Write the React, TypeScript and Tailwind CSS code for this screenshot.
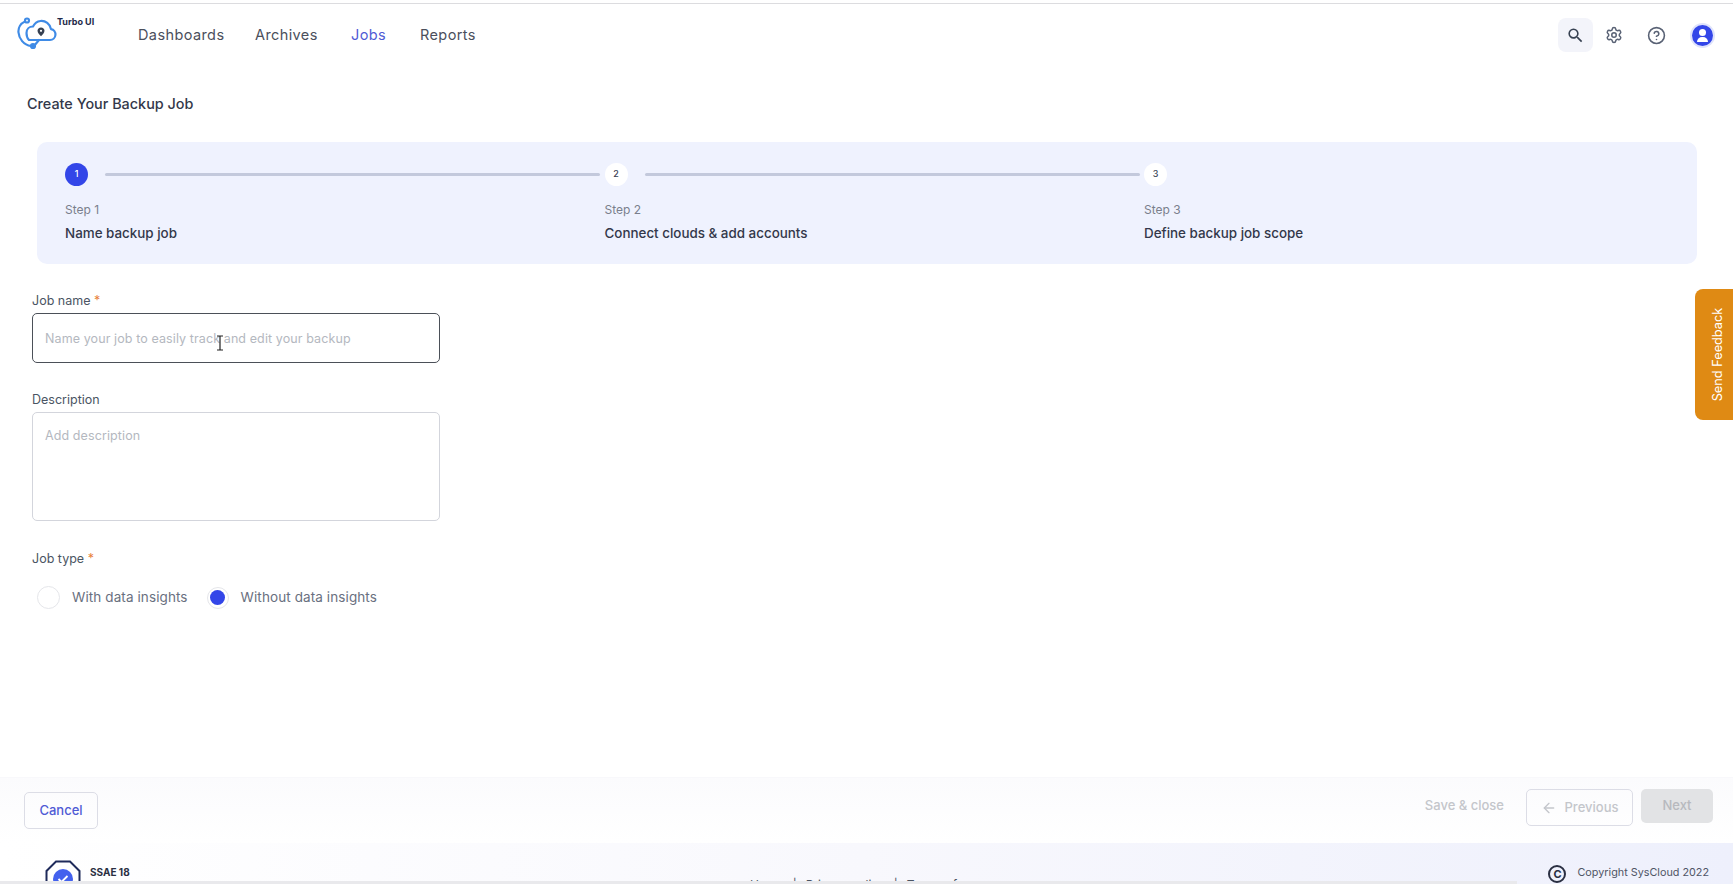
import { ArrowLeft, CircleHelp, Settings } from 'lucide-react';

const navItems = ['Dashboards', 'Archives', 'Jobs', 'Reports'];

const steps = [
  { num: 1, label: 'Step 1', title: 'Name backup job' },
  { num: 2, label: 'Step 2', title: 'Connect clouds & add accounts' },
  { num: 3, label: 'Step 3', title: 'Define backup job scope' },
];

function CloudLogo() {
  return (
    <svg width="42" height="34" viewBox="0 0 42 34" fill="none" stroke="#3f8be6" strokeWidth="2.2" strokeLinecap="round" strokeLinejoin="round">
      <path d="M12 23h21a5.500 5.500 0 0 0 1-10.900C33 7 28.500 3.500 23.500 4 20 4.400 17.500 6.500 16 9.500 12.500 9.500 9.500 12 9.500 16c0 3 1 5.500 2.500 7z" />
      <path d="M8 4.500C3.500 6.500 1 11 1.500 15.500 2 21.500 6.500 28 14 29" />
      <path d="M14 29h3l5-6" />
      <circle cx="10" cy="3.500" r="2" />
      <circle cx="16" cy="29" r="2" />
      <path d="M24 10.500c-2 0-3.500 1.500-3.500 3.300 0 2 2 4 3.500 5.500 1.500-1.500 3.500-3.500 3.500-5.500 0-1.800-1.500-3.300-3.500-3.300z" fill="#374151" stroke="none" />
      <circle cx="24" cy="13.800" r="1.100" fill="#fff" stroke="none" />
    </svg>
  );
}

function Header() {
  return (
    <header className="h-[62px] flex items-center justify-between pl-[17px] pr-[20px] shrink-0">
      <div className="flex items-center">
        <div className="w-[121px] h-[40px] relative flex items-start">
          <div className="mt-[2px]">
            <CloudLogo />
          </div>
          <span className="absolute left-[40px] top-[1px] text-[9px] leading-[12px] font-bold text-[#1e2a4a]">Turbo UI</span>
        </div>
        <nav className="flex items-center text-[14.500px] tracking-[0.4px] text-[#4b4f5c]">
          {navItems.map((item) => (
            <a
              key={item}
              className={
                item === 'Jobs'
                  ? 'text-[#4f5bd5] w-[69px]'
                  : item === 'Archives'
                    ? 'w-[96px]'
                    : item === 'Dashboards'
                      ? 'w-[117px]'
                      : ''
              }
            >
              {item}
            </a>
          ))}
        </nav>
      </div>
      <div className="flex items-center">
        <div className="w-[35px] h-[34px] rounded-lg bg-[#f3f4fa] flex items-center justify-center">
          <svg width="19" height="19" viewBox="0 0 24 24" fill="#374151">
            <path d="M15.500 14h-.790l-.280-.270A6.471 6.471 0 0 0 16 9.500 6.500 6.500 0 1 0 9.500 16c1.610 0 3.090-.590 4.230-1.570l.270.280v.790l5 4.990L20.490 19l-4.990-5zm-6 0C7.010 14 5 11.990 5 9.500S7.010 5 9.500 5 14 7.010 14 9.500 11.990 14 9.500 14z" />
          </svg>
        </div>
        <Settings className="w-[18px] h-[18px] ml-[12px] text-[#596275]" />
        <CircleHelp className="w-[19px] h-[19px] ml-[24px] text-[#596275]" />
        <div className="ml-[26px] w-[21px] h-[21px] rounded-full bg-[#3346e8] ring-2 ring-[#dfe3fb] flex items-center justify-center relative overflow-hidden">
          <div className="absolute top-[4px] w-[7px] h-[7px] rounded-full bg-white" />
          <div className="absolute top-[12px] w-[11px] h-[5px] rounded-t-full rounded-b-sm bg-white" />
        </div>
      </div>
    </header>
  );
}

function Stepper() {
  return (
    <div className="ml-[37px] mr-[36px] mt-[27px] h-[122px] rounded-[10px] bg-[#eff2fe] pl-[28px] pt-[20px] flex">
      {steps.map((step) => (
        <div key={step.num} className="w-[539.500px] shrink-0">
          <div className="flex items-center h-[24px]">
            <div
              className={
                step.num === 1
                  ? 'w-[23px] h-[23px] rounded-full bg-[#3346e8] text-white text-[9px] font-medium flex items-center justify-center shrink-0'
                  : 'w-[23px] h-[23px] rounded-full bg-white text-[#374151] text-[9px] font-medium flex items-center justify-center shrink-0'
              }
            >
              {step.num}
            </div>
            {step.num < 3 && <div className="ml-[17px] w-[495px] h-[3px] rounded-full bg-[#c3c9dc]" />}
          </div>
          <div className="mt-[16px] text-[12px] leading-[16px] text-[#7a7f8c]">{step.label}</div>
          <div className="mt-[5px] text-[13.400px] leading-[20px] font-medium text-[#33384a]">{step.title}</div>
        </div>
      ))}
    </div>
  );
}

function JobForm() {
  return (
    <div className="pl-[32px] w-[440px] text-[12.500px] text-[#4b5563]">
      <div className="mt-[29px] leading-[16px]">
        Job name <span className="text-[#e8803a]">*</span>
      </div>
      <div className="relative mt-[4px]">
        <input
          placeholder="Name your job to easily track and edit your backup"
          className="w-full h-[50px] rounded-[5px] border border-[#4b5058] pl-[12px] pt-[1px] text-[12.500px] tracking-[0.1px] outline-none placeholder:text-[#b4b8c0]"
        />
        <svg className="absolute left-[183px] top-[22px]" width="10" height="16" viewBox="0 0 10 16" fill="none" stroke="#222" strokeWidth="1.200">
          <path d="M2 1h6M5 1v14M2 15h6" />
        </svg>
      </div>
      <div className="mt-[29px] leading-[16px]">Description</div>
      <textarea
        placeholder="Add description"
        className="block mt-[4px] w-full h-[109px] rounded-[5px] border border-[#d3d5dc] pl-[12px] pt-[14px] text-[12.500px] tracking-[0.1px] outline-none resize-none placeholder:text-[#b4b8c0]"
      />
      <div className="mt-[30px] leading-[16px]">
        Job type <span className="text-[#e8803a]">*</span>
      </div>
      <div className="mt-[19px] flex items-center text-[13.500px] tracking-[0.1px] text-[#697080]">
        <div className="ml-[5px] w-[23px] h-[23px] rounded-full border border-[#e5e6ea]" />
        <span className="ml-[12px]">With data insights</span>
        <div className="ml-[19px] w-[22px] h-[22px] rounded-full border border-[#e5e6ea] flex items-center justify-center">
          <div className="w-[15px] h-[15px] rounded-full bg-[#3346e8]" />
        </div>
        <span className="ml-[12px]">Without data insights</span>
      </div>
    </div>
  );
}

function ActionBar() {
  return (
    <div className="h-[66px] shrink-0 flex items-start justify-between pl-[24px] pr-[20px] pt-[14px] bg-gradient-to-b from-[#fbfbfd] to-white border-t border-[#f8f8fb]">
      <button className="w-[74px] h-[37px] rounded-[5px] border border-[#dcdde6] text-[13px] text-[#4f5bd5] font-medium">Cancel</button>
      <div className="flex items-start -mt-[3px] text-[13px] font-medium text-[#c4c6cb]">
        <span className="mt-[7px]">Save &amp; close</span>
        <button className="ml-[22px] w-[107px] h-[37px] rounded-[5px] border border-[#dcdde6] flex items-center justify-center gap-[8px]">
          <ArrowLeft className="w-[16px] h-[16px]" />
          Previous
        </button>
        <button className="ml-[8px] w-[72px] h-[34px] rounded-[5px] bg-[#e2e3e5] text-[#b7b9be]">Next</button>
      </div>
    </div>
  );
}

function Footer() {
  return (
    <footer className="h-[41px] shrink-0 bg-gradient-to-r from-white via-[#f8f8fd] to-[#eef0fc] relative overflow-hidden flex justify-between pl-[45px] pr-[24px] pt-[17px]">
      <div className="flex items-start">
        <svg width="36" height="38" viewBox="0 0 36 38" fill="none">
          <path d="M11 1.500h14L34.500 11v16L25 36.500H11L1.500 27V11z" stroke="#1e2a5a" strokeWidth="2" />
          <circle cx="18" cy="19" r="10" fill="#4361ee" />
          <path d="M13.500 19l3 3 6-6" stroke="#fff" strokeWidth="1.800" />
        </svg>
        <div className="ml-[9px] mt-[5px] text-[10px] leading-[14px] font-bold text-[#2a2f42]">
          SSAE 18
          <div className="font-normal">certified</div>
        </div>
      </div>
      <div className="absolute left-[750px] top-[33px] flex items-center gap-[9px] text-[12px] text-[#4b5563]">
        <span>Home</span>
        <span>|</span>
        <span>Privacy policy</span>
        <span>|</span>
        <span>Terms of use</span>
      </div>
      <div className="flex items-start mt-[5px] text-[10.800px] leading-[16px] text-[#4f5566]">
        <span className="w-[18px] h-[18px] rounded-full border-2 border-[#2a2f42] text-[11px] leading-[14px] font-bold text-center text-[#2a2f42]">C</span>
        <span className="ml-[11px]">Copyright SysCloud 2022</span>
      </div>
    </footer>
  );
}

export default function App() {
  return (
    <div className="relative h-[884px] overflow-hidden bg-white flex flex-col pt-[3px] font-['Inter',sans-serif]">
      <div className="h-[1px] shrink-0 bg-[#dcdcdf]" />
      <Header />
      <main className="flex-1 min-h-0">
        <h1 className="pl-[27px] mt-[27px] text-[14.400px] leading-[22px] font-medium text-[#33384a]">Create Your Backup Job</h1>
        <Stepper />
        <JobForm />
      </main>
      <ActionBar />
      <Footer />
      <div className="absolute left-0 bottom-0 w-[1517px] h-[3px] bg-[#e9e9ec]" />
      <div className="absolute right-0 top-[289px] w-[38px] h-[131px] rounded-l-[8px] bg-[#df8a14] pl-[8px] text-white text-[12.750px] flex items-center justify-center">
        <span className="-rotate-90 whitespace-nowrap">Send Feedback</span>
      </div>
    </div>
  );
}
